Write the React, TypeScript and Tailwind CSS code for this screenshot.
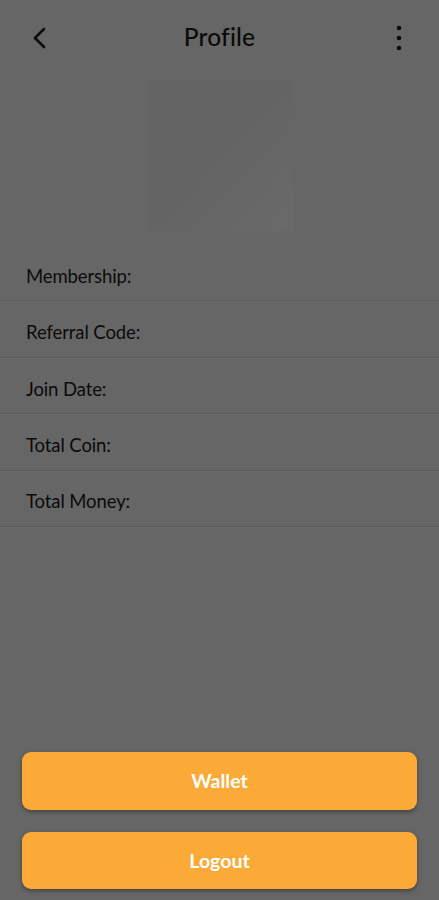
import React from "react";

const rows = ["Membership:", "Referral Code:", "Join Date:", "Total Coin:", "Total Money:"];

export default function App() {
  return (
    <div
      className="flex h-[900px] w-full flex-col bg-[#666666] text-[#0b0b0b]"
      style={{ fontFamily: "Lato, 'Open Sans', sans-serif" }}
    >
      <header className="flex h-[75px] items-center justify-between px-[30px]">
        <svg width="20" height="24" viewBox="0 0 20 24" fill="none">
          <path d="M14 3 L5 12 L14 21" stroke="#0b0b0b" strokeWidth="2.6" strokeLinecap="round" strokeLinejoin="round" />
        </svg>
        <h1 className="text-[24.5px] font-medium tracking-[0.2px]">Profile</h1>
        <svg width="20" height="28" viewBox="0 0 20 28">
          <circle cx="10" cy="4" r="2.3" fill="#0b0b0b" />
          <circle cx="10" cy="14" r="2.3" fill="#0b0b0b" />
          <circle cx="10" cy="24" r="2.3" fill="#0b0b0b" />
        </svg>
      </header>

      <div className="mt-[5px] flex justify-center">
        <div className="ml-[2px] h-[151px] w-[145px] bg-gradient-to-br from-[#646464] via-[#646464] to-[#6a6a6a]" />
      </div>

      <div className="mt-[14px] flex flex-col">
        {rows.map((r) => (
          <div
            key={r}
            className="flex h-[56.4px] items-center border-b border-[#5b5b5b] pl-[26px] pt-[8px] text-[18.5px] tracking-[-0.1px] shadow-[0_1px_0_#6c6c6c]"
          >
            {r}
          </div>
        ))}
      </div>

      <div className="mt-auto flex flex-col gap-[22px] px-[22px] pb-[11px]">
        <button className="h-[58px] w-full rounded-[9px] bg-[#fba937] text-[19.5px] font-bold text-white shadow-[0_2px_4px_rgba(0,0,0,0.35)]">
          Wallet
        </button>
        <button className="h-[57px] w-full rounded-[9px] bg-[#fba937] text-[19.5px] font-bold text-white shadow-[0_2px_4px_rgba(0,0,0,0.35)]">
          Logout
        </button>
      </div>
    </div>
  );
}
